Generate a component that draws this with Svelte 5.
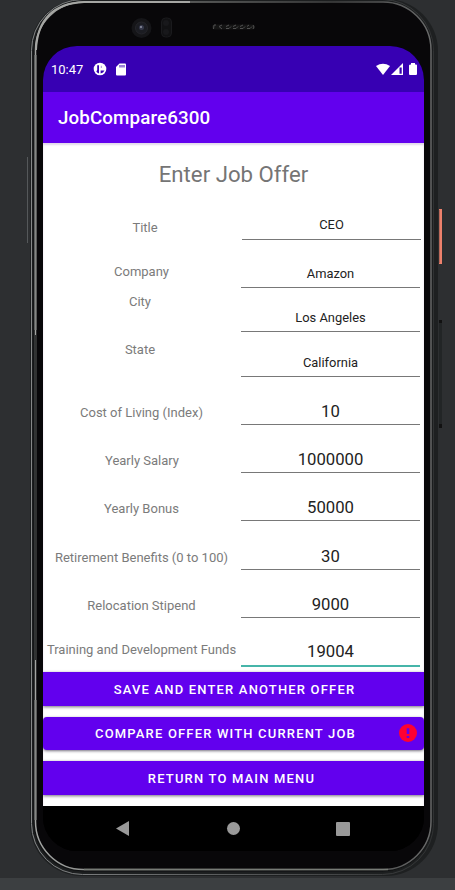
<script>
  const fields = [
    { label: 'Title', value: 'CEO', height: 48, lift: 4, shift: 3 },
    { label: 'Company', value: 'Amazon', height: 48, lift: 8, shift: -0.5 },
    { label: 'City', value: 'Los Angeles', height: 44, lift: 22, shift: -2 },
    { label: 'State', value: 'California', height: 45, lift: 19, shift: -2 },
    { label: 'Cost of Living (Index)', value: '10', height: 48, lift: 4, shift: -0.5, numeric: true },
    { label: 'Yearly Salary', value: '1000000', height: 48, lift: 4, shift: 0, numeric: true },
    { label: 'Yearly Bonus', value: '50000', height: 48, lift: 4, shift: -0.5, numeric: true },
    { label: 'Retirement Benefits (0 to 100)', value: '30', height: 49, lift: 4, shift: -0.5, numeric: true },
    { label: 'Relocation Stipend', value: '9000', height: 48, lift: 4, shift: -0.5, numeric: true },
    { label: 'Training and Development Funds', value: '19004', height: 49, lift: 9, shift: -0.5, numeric: true, active: true }
  ];
</script>

<div class="desktop">
  <svg class="device" width="455" height="890" viewBox="0 0 455 890" aria-hidden="true">
    <defs>
      <linearGradient id="rim" x1="0" y1="0" x2="1" y2="0">
        <stop offset="0" stop-color="#a2a4a2" />
        <stop offset=".3" stop-color="#777977" />
        <stop offset=".75" stop-color="#414242" />
        <stop offset="1" stop-color="#686969" />
      </linearGradient>
      <linearGradient id="edge" x1="0" y1="0" x2="1" y2="0">
        <stop offset="0" stop-color="#858788" />
        <stop offset=".4" stop-color="#606263" />
        <stop offset="1" stop-color="#303233" />
      </linearGradient>
    </defs>
    <rect y="878" width="455" height="12" fill="#3c3f41" />
    <rect x="30" y="-1" width="408" height="877" rx="52" fill="#1e2021" />
    <rect x="31.500" y="-.5" width="402" height="875" rx="51" fill="none" stroke="url(#edge)" />
    <rect x="33" y="1" width="399.500" height="871" rx="50" fill="#101112" stroke="#1b1d1e" />
    <rect x="35.500" y="2" width="395.500" height="867.500" rx="48" fill="#080709" stroke="url(#rim)" stroke-width="1.500" />
    <path d="M35.500 55V330M35.500 700V820" stroke="#858785" stroke-width="2" />
    <path d="M35.500 335V660" stroke="#303232" stroke-width="2" />
    <path d="M36 50Q38 4 84 2H190" fill="none" stroke="#a5a6a3" stroke-width="2" />
    <path d="M84 869.500H388" stroke="#777b76" stroke-width="1.500" />
    <path d="M27.500 157V243" stroke="#55585a" />
    <rect x="439" y="209" width="3" height="55" fill="#ed816c" />
    <path d="M439.500 210V263" stroke="#b96859" />
    <rect x="439" y="320" width="3" height="107" rx="1" fill="#222526" />
    <path d="M440.500 320V323M440.500 424V428" stroke="#111" stroke-width="3" />
    <circle cx="141.500" cy="28" r="10" fill="#151518" />
    <circle cx="141.500" cy="28" r="6" fill="#1b1c22" stroke="#25252a" />
    <circle cx="141.500" cy="27.500" r="2.500" fill="#36394b" />
    <circle cx="141" cy="27" r="1" fill="#9294a5" />
    <rect x="161.500" y="18" width="10" height="19" rx="4" fill="#111113" stroke="#1a1a1d" />
    <circle cx="166" cy="23" r="3" fill="#18181b" /><circle cx="166" cy="32" r="3" fill="#18181b" />
    <rect x="212" y="24.500" width="43" height="5" rx="2.500" fill="#141414" />
    <path d="M216 25h-2l-.5 4M222 25l-3 1.500 3 2.500M229 25l-3 1.500M226 28.500h3l2-2M236 25l-3 1.500M233 28.500h3l2-2M243 25l-3 1.500M240 28.500h3l2-2M249 25l-2 1.500M247 28.500h3l2-2M253 25l1 2-1 2" fill="none" stroke="#505050" />
  </svg>

  <main class="screen">
    <header class="status">
      <span class="clock">10:47</span>
      <svg class="circle-icon" width="14" height="14" viewBox="0 0 14 14" aria-hidden="true">
        <circle cx="7" cy="7" r="6.300" fill="#fff" />
        <path d="M4.200 3.200H6V11.500Q4.200 11 3.300 9.500L4.200 8Z" fill="#3700b3" />
        <path d="M7.600 8.600H11.500Q10.500 11 7.600 11.500Z" fill="#3700b3" />
        <path d="M7.800 3.700H9V6H7.800Z" fill="#b9a4e2" />
      </svg>
      <svg class="card-icon" width="10" height="13" viewBox="0 0 10 13" aria-hidden="true">
        <path d="M3.500.5H9Q10 .5 10 1.500V11.500Q10 12.500 9 12.500H1Q0 12.500 0 11.500V4Z" fill="#fff" />
        <path d="M4 2V4.500M6 2V4.500M8 2V4.500" stroke="#3700b3" />
      </svg>
      <span class="grow"></span>
      <svg width="41" height="13" viewBox="0 0 41 13" aria-hidden="true">
        <path d="M0 3Q7-1.500 14 3L7 12Z" fill="#fff" />
        <path d="M27 0V12H15Z" fill="#fff" /><path d="M23.500 4.500H25.700V10.800H23.500Z" fill="#3700b3" />
        <path d="M35 0H39V1.500H40Q41 1.500 41 2.500V11Q41 12 40 12H34Q33 12 33 11V2.500Q33 1.500 35 1.500Z" fill="#fff" />
      </svg>
    </header>
    <div class="appbar">JobCompare6300</div>
    <section class="content">
      <h1>Enter Job Offer</h1>
      <div class="form">
        {#each fields as field, i}
          <div class="row" style:height={`${field.height}px`}>
            <label for={`field-${i}`} style:padding-bottom={`${field.lift}px`} style:padding-left={`${Math.max(0, field.shift * 2)}px`} style:padding-right={`${Math.max(0, -field.shift * 2)}px`}>{field.label}</label>
            <div id={`field-${i}`} class="value" class:first={i === 0} class:numeric={field.numeric} class:active={field.active}>{field.value}</div>
          </div>
        {/each}
      </div>
      <div class="actions">
        <button class="save">Save and enter another offer</button>
        <button class="compare"><span>Compare offer with current job</span>
          <svg width="18" height="18" viewBox="0 0 18 18" aria-hidden="true">
            <circle cx="9" cy="9" r="9" fill="#ff0031" /><path d="M7.700 4.200H10.300V10H7.700ZM7.700 12H10.300V14H7.700Z" fill="#6200ee" />
          </svg>
        </button>
        <button>Return to main menu</button>
      </div>
    </section>
    <nav>
      <svg width="381" height="45" viewBox="0 0 381 45" aria-label="Navigation">
        <path d="M73 22.500L86 15V30Z" fill="#999" />
        <circle cx="190.500" cy="22.500" r="6.500" fill="#999" />
        <rect x="293" y="16" width="14" height="14" rx="1" fill="#999" />
      </svg>
    </nav>
  </main>
</div>

<style>
  :global(body) { margin: 0; background: #2d2f31; }
  .desktop { position: relative; width: 455px; height: 890px; overflow: hidden; padding: 46px 31px 39px 43px; box-sizing: border-box; background: #2d2f31; font-family: Roboto, "Liberation Sans", sans-serif; }
  .device { position: absolute; inset: 0; }
  .screen { position: relative; width: 381px; height: 805px; overflow: hidden; border-radius: 34px; background: #000; }
  .status { height: 46px; box-sizing: border-box; display: flex; align-items: center; padding: 0 7px 0 8px; background: #3700b3; color: #fff; }
  .clock { font-size: 13px; font-weight: 450; width: 42px; white-space: nowrap; }
  .card-icon { margin-left: 9px; }
  .grow { flex: 1; }
  .appbar { height: 51px; box-sizing: border-box; padding: 1px 15px 0; background: #6200ee; color: #fff; font-size: 18.800px; font-weight: 480; line-height: 51px; letter-spacing: .1px; }
  .content { height: 663px; overflow: hidden; background: #fff; box-shadow: inset 0 2px 2px #e2d8eb; }
  h1 { height: 49px; margin: 0; padding-top: 17px; box-sizing: border-box; text-align: center; color: #757575; font-size: 22.200px; line-height: 28px; font-weight: 400; }
  .row { display: grid; grid-template-columns: 198px 179px; align-items: end; }
  label { color: #7b7b7b; font-size: 13px; line-height: 16px; text-align: center; white-space: nowrap; }
  .value { height: 22px; box-sizing: border-box; border-bottom: 1px solid #787878; color: #222; font-size: 12.900px; line-height: 16px; text-align: center; }
  .first { height: 23px; margin-left: 1px; margin-right: -1px; }
  .numeric { height: 23px; font-size: 16.700px; line-height: 20px; }
  .active { height: 25px; border-bottom: 2px solid #46b5a9; }
  .actions { display: flex; flex-direction: column; gap: 11px; padding-top: 5px; }
  button { display: block; width: 100%; height: 33.500px; border: 0; padding: 1px 4px 0 0; background: #6200ee; color: #fff; font: 500 13px/33px Roboto, "Liberation Sans", sans-serif; letter-spacing: 1.170px; text-align: center; text-transform: uppercase; white-space: nowrap; box-shadow: 0 1px 3px #756e7d; }
  .save { padding-right: 0; padding-left: 2px; }
  .compare { display: flex; align-items: center; border-radius: 4px; padding: 0 7px 0 9px; }
  .compare span { flex: 1; padding-top: 1px; }
  nav { height: 45px; background: #000; }
  nav svg { display: block; }
</style>
